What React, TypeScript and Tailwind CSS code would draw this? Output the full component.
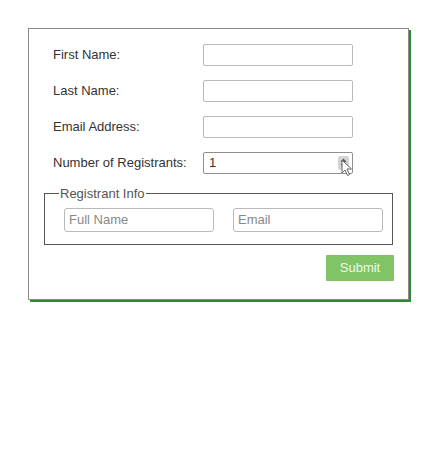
export default function App() {
  const rows = ['First Name:', 'Last Name:', 'Email Address:']
  return (
    <div className="h-[466px] w-[440px] bg-white pl-[28px] pt-[28px] font-['Liberation_Sans',Arial,sans-serif] text-[13px] text-[#333]">
      <div className="h-[272px] w-[381px] border border-[#8a8a8a] bg-white shadow-[2px_2px_0_#2f8a2f]">
        <div className="flex flex-col gap-[14px] pl-[24px] pt-[15px]">
          {rows.map((label) => (
            <div key={label} className="flex h-[22px] items-center">
              <span className="w-[150px]">{label}</span>
              <div className="h-[22px] w-[150px] rounded-[2px] border border-[#b9b9b9] bg-white" />
            </div>
          ))}
          <div className="flex h-[22px] items-center">
            <span className="w-[150px]">Number of Registrants:</span>
            <div className="relative flex h-[22px] w-[150px] items-center rounded-[2px] border border-[#8f8f8f] bg-white pl-[5px]">
              <span>1</span>
              <div className="absolute right-[3px] top-[3px] flex h-[14px] w-[11px] flex-col items-center justify-center rounded-[2px] bg-[#d4d4d4]">
                <svg width="7" height="10" viewBox="0 0 7 10">
                  <path d="M3.5 0.5 L6.5 4 H0.5 Z M0.5 6 H6.5 L3.5 9.5 Z" fill="#555" />
                </svg>
              </div>
              <svg className="absolute left-[137px] top-[6px]" width="12" height="18" viewBox="0 0 12 18">
                <path d="M1 1 L1 14 L4 11 L6.5 16.5 L8.5 15.5 L6 10 L10.5 10 Z" fill="#fff" stroke="#666" strokeWidth="1" />
              </svg>
            </div>
          </div>
        </div>
        <fieldset className="mx-[15px] mt-[10px] min-w-0 border border-[#555] pb-[12px] pl-[19px] pr-[9px]">
          <legend className="-ml-[5px] px-[1px] text-[13px] text-[#555]">Registrant Info</legend>
          <div className="mt-[4px] flex gap-[19px]">
            <div className="flex h-[24px] w-[150px] items-center rounded-[3px] border border-[#b9b9b9] pl-[4px] text-[#888]">
              Full Name
            </div>
            <div className="flex h-[24px] w-[150px] items-center rounded-[3px] border border-[#b9b9b9] pl-[4px] text-[#888]">
              Email
            </div>
          </div>
        </fieldset>
        <div className="mr-[14px] mt-[10px] flex justify-end">
          <button className="h-[26px] w-[68px] rounded-[1px] bg-[#80c466] text-[13px] text-[#eef8e8]">Submit</button>
        </div>
      </div>
    </div>
  )
}
